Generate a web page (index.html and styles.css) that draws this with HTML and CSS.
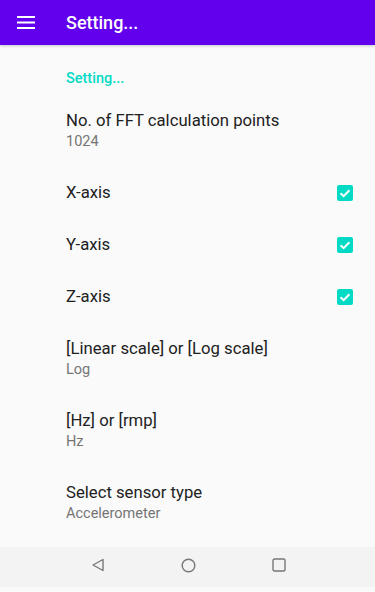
FILE: index.html
```html
<!DOCTYPE html>
<html>
<head>
<meta charset="utf-8">
<link rel="stylesheet" href="styles.css">
</head>
<body>
<div class="screen">
  <header class="appbar">
    <div class="menu">
      <svg width="18" height="13" viewBox="0 0 18 13"><rect x="0" y="0" width="18" height="2" fill="#fff"/><rect x="0" y="5.5" width="18" height="2" fill="#fff"/><rect x="0" y="11" width="18" height="2" fill="#fff"/></svg>
    </div>
    <div class="apptitle">Setting...</div>
  </header>
  <main class="list">
    <div class="category">Setting...</div>
    <div class="item two">
      <div class="title">No. of FFT calculation points</div>
      <div class="summary">1024</div>
    </div>
    <div class="item one">
      <div class="title">X-axis</div>
      <span class="check"><svg width="16" height="16" viewBox="0 0 16 16"><path d="M3.6 8.2 L6.6 11.1 L12.4 5.2" fill="none" stroke="#fff" stroke-width="2"/></svg></span>
    </div>
    <div class="item one">
      <div class="title">Y-axis</div>
      <span class="check"><svg width="16" height="16" viewBox="0 0 16 16"><path d="M3.6 8.2 L6.6 11.1 L12.4 5.2" fill="none" stroke="#fff" stroke-width="2"/></svg></span>
    </div>
    <div class="item one">
      <div class="title">Z-axis</div>
      <span class="check"><svg width="16" height="16" viewBox="0 0 16 16"><path d="M3.6 8.2 L6.6 11.1 L12.4 5.2" fill="none" stroke="#fff" stroke-width="2"/></svg></span>
    </div>
    <div class="item two">
      <div class="title">[Linear scale] or [Log scale]</div>
      <div class="summary">Log</div>
    </div>
    <div class="item two">
      <div class="title">[Hz] or [rmp]</div>
      <div class="summary">Hz</div>
    </div>
    <div class="item two">
      <div class="title">Select sensor type</div>
      <div class="summary">Accelerometer</div>
    </div>
  </main>
  <nav class="navbar">
    <svg width="14" height="14" viewBox="0 0 14 14"><path d="M12 1.5 L12 12.5 L2 7 Z" fill="none" stroke="#777" stroke-width="1.4" stroke-linejoin="round"/></svg>
    <svg width="15" height="15" viewBox="0 0 15 15"><circle cx="7.5" cy="7.5" r="6.3" fill="none" stroke="#777" stroke-width="1.4"/></svg>
    <svg width="14" height="14" viewBox="0 0 14 14"><rect x="1" y="1" width="12" height="12" rx="1.5" fill="none" stroke="#777" stroke-width="1.4"/></svg>
  </nav>
</div>
</body>
</html>
```
FILE: styles.css
```css
html, body {
  margin: 0;
  padding: 0;
}
body {
  font-family: Roboto, "Noto Sans", sans-serif;
  background: #fafafa;
}
.screen {
  width: 375px;
  height: 592px;
  display: flex;
  flex-direction: column;
  overflow: hidden;
}
.appbar {
  height: 45px;
  flex: none;
  background: #6200ee;
  display: flex;
  align-items: center;
  box-shadow: 0 1px 3px rgba(0,0,0,0.2);
  position: relative;
  z-index: 1;
}
.menu {
  width: 49px;
  padding-left: 17px;
  display: flex;
  align-items: center;
  height: 100%;
}
.menu svg { display: block; }
.apptitle {
  color: #fff;
  font-size: 18px;
  font-weight: 500;
}
.list {
  flex: 1;
  background: #fafafa;
  display: flex;
  flex-direction: column;
}
.category {
  height: 50px;
  box-sizing: border-box;
  padding-left: 66px;
  padding-top: 16px;
  display: flex;
  align-items: center;
  color: #03dac5;
  font-size: 14.5px;
  font-weight: 500;
}
.item {
  padding-left: 66px;
  padding-right: 22px;
  box-sizing: border-box;
  display: flex;
}
.item.two {
  height: 72px;
  flex-direction: column;
  justify-content: center;
}
.item.one {
  height: 52px;
  align-items: center;
  justify-content: space-between;
}
.title {
  font-size: 16.7px;
  color: #212121;
  line-height: 20px;
}
.summary {
  font-size: 14.5px;
  color: #757575;
  line-height: 20px;
  margin-top: 1px;
}
.check {
  width: 16px;
  height: 16px;
  border-radius: 2px;
  background: #03dac5;
  display: block;
}
.check svg { display: block; }
.navbar {
  height: 45px;
  box-sizing: border-box;
  flex: none;
  background: #f3f3f3;
  border-bottom: 5px solid #fafafa;
  display: flex;
  align-items: center;
  padding-left: 91px;
  gap: 76px;
  padding-bottom: 4px;
}
.navbar svg { display: block; }
```
